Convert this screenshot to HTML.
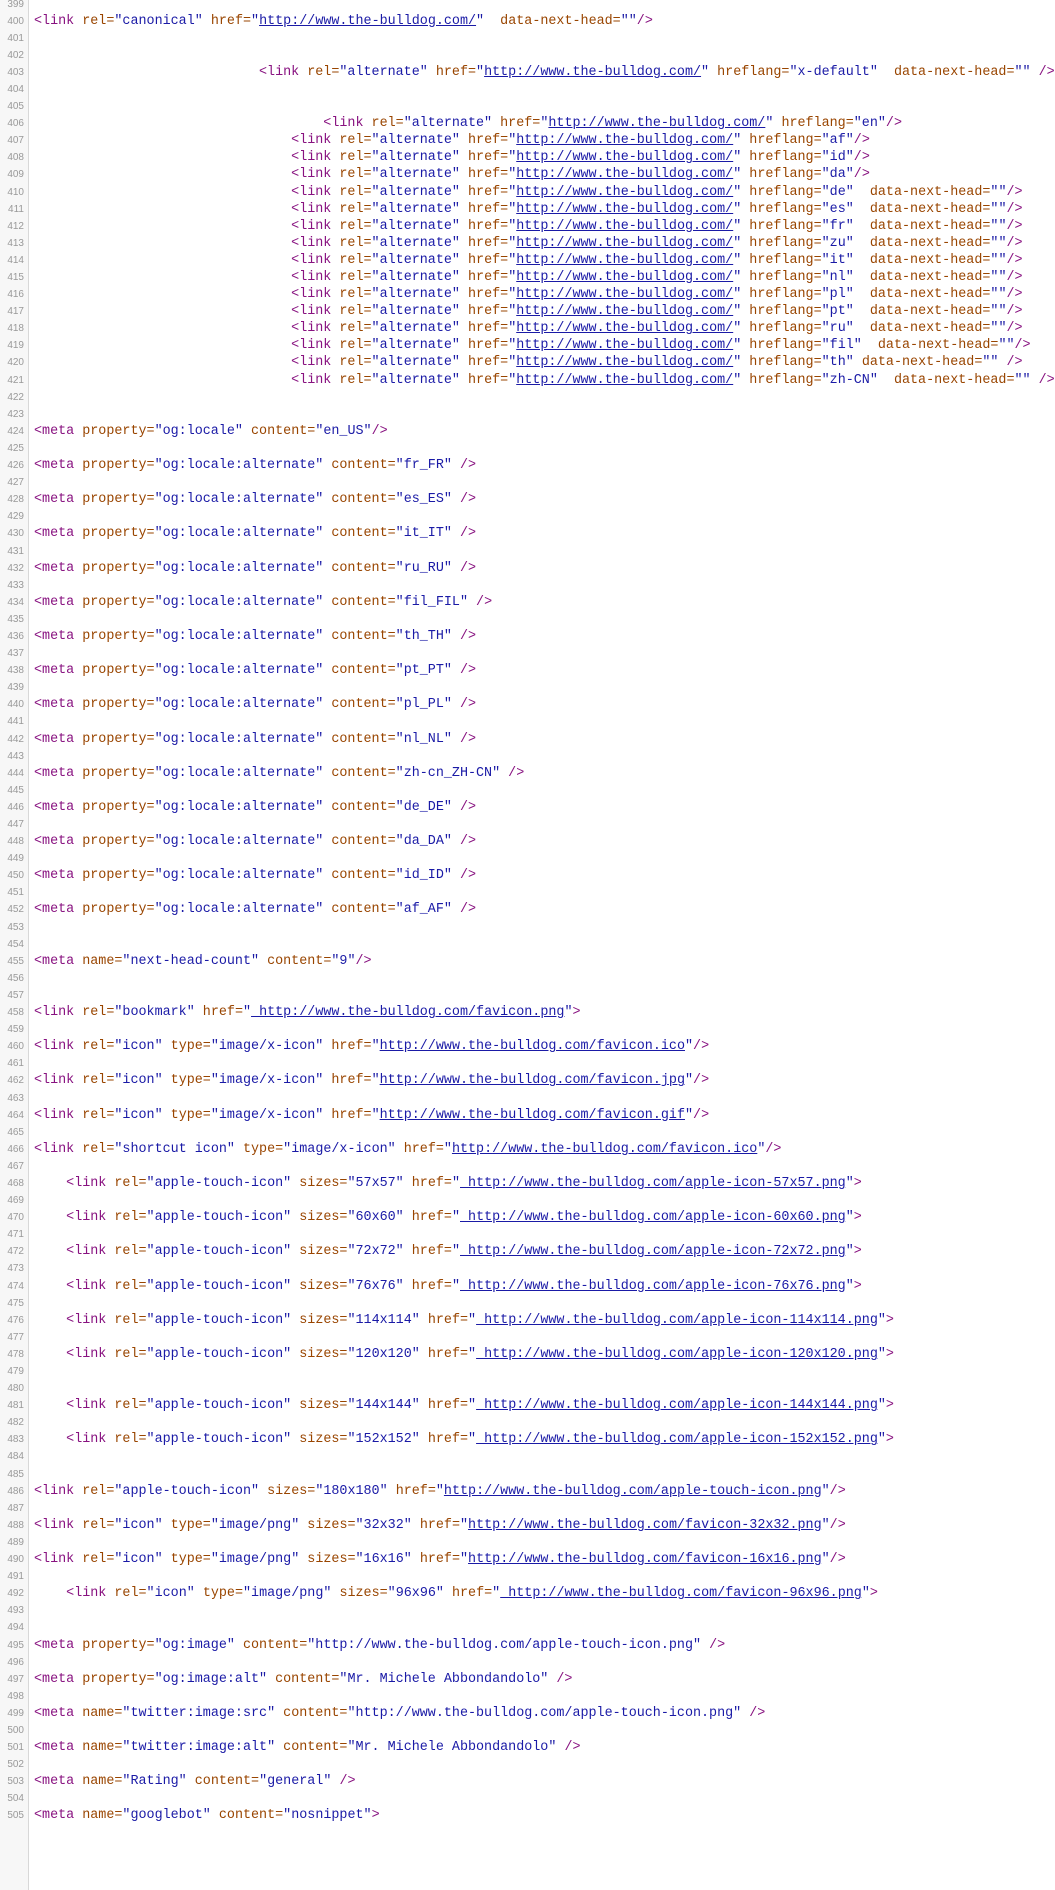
<!DOCTYPE html>
<html><head><meta charset="utf-8"><style>
html,body{margin:0;padding:0;background:#fff;width:1055px;height:1820px;overflow:hidden}
#w{position:relative;margin-top:-4.5px}
#g{position:absolute;left:0;top:-10px;width:28px;height:1900px;background:#f7f7f7;border-right:1px solid #d8d8d8}
.l{position:relative;height:17.1px;line-height:17px;white-space:pre;font-family:"Liberation Mono",monospace;font-size:13.4px;color:#000}
.n{position:absolute;left:0;width:24px;text-align:right;font-family:"Liberation Sans",sans-serif;font-size:10px;color:#999}
.c{position:absolute;left:34px}
.t{color:#881280}.a{color:#994500}.v{color:#1a1aa6}.u{color:#1a1aa6;text-decoration:underline}
</style></head><body><div id="g"></div><div id="w">
<div class="l"><span class="n">399</span></div>
<div class="l"><span class="n">400</span><span class="c"><span class="t">&lt;link</span> <span class="a">rel=</span><span class="v">"canonical"</span> <span class="a">href=</span><span class="v">"</span><span class="u">http://www.the-bulldog.com/</span><span class="v">"</span>  <span class="a">data-next-head=</span><span class="v">""</span><span class="t">/&gt;</span></span></div>
<div class="l"><span class="n">401</span></div>
<div class="l"><span class="n">402</span></div>
<div class="l"><span class="n">403</span><span class="c">                            <span class="t">&lt;link</span> <span class="a">rel=</span><span class="v">"alternate"</span> <span class="a">href=</span><span class="v">"</span><span class="u">http://www.the-bulldog.com/</span><span class="v">"</span> <span class="a">hreflang=</span><span class="v">"x-default"</span>  <span class="a">data-next-head=</span><span class="v">""</span> <span class="t">/&gt;</span></span></div>
<div class="l"><span class="n">404</span></div>
<div class="l"><span class="n">405</span></div>
<div class="l"><span class="n">406</span><span class="c">                                    <span class="t">&lt;link</span> <span class="a">rel=</span><span class="v">"alternate"</span> <span class="a">href=</span><span class="v">"</span><span class="u">http://www.the-bulldog.com/</span><span class="v">"</span> <span class="a">hreflang=</span><span class="v">"en"</span><span class="t">/&gt;</span></span></div>
<div class="l"><span class="n">407</span><span class="c">                                <span class="t">&lt;link</span> <span class="a">rel=</span><span class="v">"alternate"</span> <span class="a">href=</span><span class="v">"</span><span class="u">http://www.the-bulldog.com/</span><span class="v">"</span> <span class="a">hreflang=</span><span class="v">"af"</span><span class="t">/&gt;</span></span></div>
<div class="l"><span class="n">408</span><span class="c">                                <span class="t">&lt;link</span> <span class="a">rel=</span><span class="v">"alternate"</span> <span class="a">href=</span><span class="v">"</span><span class="u">http://www.the-bulldog.com/</span><span class="v">"</span> <span class="a">hreflang=</span><span class="v">"id"</span><span class="t">/&gt;</span></span></div>
<div class="l"><span class="n">409</span><span class="c">                                <span class="t">&lt;link</span> <span class="a">rel=</span><span class="v">"alternate"</span> <span class="a">href=</span><span class="v">"</span><span class="u">http://www.the-bulldog.com/</span><span class="v">"</span> <span class="a">hreflang=</span><span class="v">"da"</span><span class="t">/&gt;</span></span></div>
<div class="l"><span class="n">410</span><span class="c">                                <span class="t">&lt;link</span> <span class="a">rel=</span><span class="v">"alternate"</span> <span class="a">href=</span><span class="v">"</span><span class="u">http://www.the-bulldog.com/</span><span class="v">"</span> <span class="a">hreflang=</span><span class="v">"de"</span>  <span class="a">data-next-head=</span><span class="v">""</span><span class="t">/&gt;</span></span></div>
<div class="l"><span class="n">411</span><span class="c">                                <span class="t">&lt;link</span> <span class="a">rel=</span><span class="v">"alternate"</span> <span class="a">href=</span><span class="v">"</span><span class="u">http://www.the-bulldog.com/</span><span class="v">"</span> <span class="a">hreflang=</span><span class="v">"es"</span>  <span class="a">data-next-head=</span><span class="v">""</span><span class="t">/&gt;</span></span></div>
<div class="l"><span class="n">412</span><span class="c">                                <span class="t">&lt;link</span> <span class="a">rel=</span><span class="v">"alternate"</span> <span class="a">href=</span><span class="v">"</span><span class="u">http://www.the-bulldog.com/</span><span class="v">"</span> <span class="a">hreflang=</span><span class="v">"fr"</span>  <span class="a">data-next-head=</span><span class="v">""</span><span class="t">/&gt;</span></span></div>
<div class="l"><span class="n">413</span><span class="c">                                <span class="t">&lt;link</span> <span class="a">rel=</span><span class="v">"alternate"</span> <span class="a">href=</span><span class="v">"</span><span class="u">http://www.the-bulldog.com/</span><span class="v">"</span> <span class="a">hreflang=</span><span class="v">"zu"</span>  <span class="a">data-next-head=</span><span class="v">""</span><span class="t">/&gt;</span></span></div>
<div class="l"><span class="n">414</span><span class="c">                                <span class="t">&lt;link</span> <span class="a">rel=</span><span class="v">"alternate"</span> <span class="a">href=</span><span class="v">"</span><span class="u">http://www.the-bulldog.com/</span><span class="v">"</span> <span class="a">hreflang=</span><span class="v">"it"</span>  <span class="a">data-next-head=</span><span class="v">""</span><span class="t">/&gt;</span></span></div>
<div class="l"><span class="n">415</span><span class="c">                                <span class="t">&lt;link</span> <span class="a">rel=</span><span class="v">"alternate"</span> <span class="a">href=</span><span class="v">"</span><span class="u">http://www.the-bulldog.com/</span><span class="v">"</span> <span class="a">hreflang=</span><span class="v">"nl"</span>  <span class="a">data-next-head=</span><span class="v">""</span><span class="t">/&gt;</span></span></div>
<div class="l"><span class="n">416</span><span class="c">                                <span class="t">&lt;link</span> <span class="a">rel=</span><span class="v">"alternate"</span> <span class="a">href=</span><span class="v">"</span><span class="u">http://www.the-bulldog.com/</span><span class="v">"</span> <span class="a">hreflang=</span><span class="v">"pl"</span>  <span class="a">data-next-head=</span><span class="v">""</span><span class="t">/&gt;</span></span></div>
<div class="l"><span class="n">417</span><span class="c">                                <span class="t">&lt;link</span> <span class="a">rel=</span><span class="v">"alternate"</span> <span class="a">href=</span><span class="v">"</span><span class="u">http://www.the-bulldog.com/</span><span class="v">"</span> <span class="a">hreflang=</span><span class="v">"pt"</span>  <span class="a">data-next-head=</span><span class="v">""</span><span class="t">/&gt;</span></span></div>
<div class="l"><span class="n">418</span><span class="c">                                <span class="t">&lt;link</span> <span class="a">rel=</span><span class="v">"alternate"</span> <span class="a">href=</span><span class="v">"</span><span class="u">http://www.the-bulldog.com/</span><span class="v">"</span> <span class="a">hreflang=</span><span class="v">"ru"</span>  <span class="a">data-next-head=</span><span class="v">""</span><span class="t">/&gt;</span></span></div>
<div class="l"><span class="n">419</span><span class="c">                                <span class="t">&lt;link</span> <span class="a">rel=</span><span class="v">"alternate"</span> <span class="a">href=</span><span class="v">"</span><span class="u">http://www.the-bulldog.com/</span><span class="v">"</span> <span class="a">hreflang=</span><span class="v">"fil"</span>  <span class="a">data-next-head=</span><span class="v">""</span><span class="t">/&gt;</span></span></div>
<div class="l"><span class="n">420</span><span class="c">                                <span class="t">&lt;link</span> <span class="a">rel=</span><span class="v">"alternate"</span> <span class="a">href=</span><span class="v">"</span><span class="u">http://www.the-bulldog.com/</span><span class="v">"</span> <span class="a">hreflang=</span><span class="v">"th"</span> <span class="a">data-next-head=</span><span class="v">""</span> <span class="t">/&gt;</span></span></div>
<div class="l"><span class="n">421</span><span class="c">                                <span class="t">&lt;link</span> <span class="a">rel=</span><span class="v">"alternate"</span> <span class="a">href=</span><span class="v">"</span><span class="u">http://www.the-bulldog.com/</span><span class="v">"</span> <span class="a">hreflang=</span><span class="v">"zh-CN"</span>  <span class="a">data-next-head=</span><span class="v">""</span> <span class="t">/&gt;</span></span></div>
<div class="l"><span class="n">422</span></div>
<div class="l"><span class="n">423</span></div>
<div class="l"><span class="n">424</span><span class="c"><span class="t">&lt;meta</span> <span class="a">property=</span><span class="v">"og:locale"</span> <span class="a">content=</span><span class="v">"en_US"</span><span class="t">/&gt;</span></span></div>
<div class="l"><span class="n">425</span></div>
<div class="l"><span class="n">426</span><span class="c"><span class="t">&lt;meta</span> <span class="a">property=</span><span class="v">"og:locale:alternate"</span> <span class="a">content=</span><span class="v">"fr_FR"</span> <span class="t">/&gt;</span></span></div>
<div class="l"><span class="n">427</span></div>
<div class="l"><span class="n">428</span><span class="c"><span class="t">&lt;meta</span> <span class="a">property=</span><span class="v">"og:locale:alternate"</span> <span class="a">content=</span><span class="v">"es_ES"</span> <span class="t">/&gt;</span></span></div>
<div class="l"><span class="n">429</span></div>
<div class="l"><span class="n">430</span><span class="c"><span class="t">&lt;meta</span> <span class="a">property=</span><span class="v">"og:locale:alternate"</span> <span class="a">content=</span><span class="v">"it_IT"</span> <span class="t">/&gt;</span></span></div>
<div class="l"><span class="n">431</span></div>
<div class="l"><span class="n">432</span><span class="c"><span class="t">&lt;meta</span> <span class="a">property=</span><span class="v">"og:locale:alternate"</span> <span class="a">content=</span><span class="v">"ru_RU"</span> <span class="t">/&gt;</span></span></div>
<div class="l"><span class="n">433</span></div>
<div class="l"><span class="n">434</span><span class="c"><span class="t">&lt;meta</span> <span class="a">property=</span><span class="v">"og:locale:alternate"</span> <span class="a">content=</span><span class="v">"fil_FIL"</span> <span class="t">/&gt;</span></span></div>
<div class="l"><span class="n">435</span></div>
<div class="l"><span class="n">436</span><span class="c"><span class="t">&lt;meta</span> <span class="a">property=</span><span class="v">"og:locale:alternate"</span> <span class="a">content=</span><span class="v">"th_TH"</span> <span class="t">/&gt;</span></span></div>
<div class="l"><span class="n">437</span></div>
<div class="l"><span class="n">438</span><span class="c"><span class="t">&lt;meta</span> <span class="a">property=</span><span class="v">"og:locale:alternate"</span> <span class="a">content=</span><span class="v">"pt_PT"</span> <span class="t">/&gt;</span></span></div>
<div class="l"><span class="n">439</span></div>
<div class="l"><span class="n">440</span><span class="c"><span class="t">&lt;meta</span> <span class="a">property=</span><span class="v">"og:locale:alternate"</span> <span class="a">content=</span><span class="v">"pl_PL"</span> <span class="t">/&gt;</span></span></div>
<div class="l"><span class="n">441</span></div>
<div class="l"><span class="n">442</span><span class="c"><span class="t">&lt;meta</span> <span class="a">property=</span><span class="v">"og:locale:alternate"</span> <span class="a">content=</span><span class="v">"nl_NL"</span> <span class="t">/&gt;</span></span></div>
<div class="l"><span class="n">443</span></div>
<div class="l"><span class="n">444</span><span class="c"><span class="t">&lt;meta</span> <span class="a">property=</span><span class="v">"og:locale:alternate"</span> <span class="a">content=</span><span class="v">"zh-cn_ZH-CN"</span> <span class="t">/&gt;</span></span></div>
<div class="l"><span class="n">445</span></div>
<div class="l"><span class="n">446</span><span class="c"><span class="t">&lt;meta</span> <span class="a">property=</span><span class="v">"og:locale:alternate"</span> <span class="a">content=</span><span class="v">"de_DE"</span> <span class="t">/&gt;</span></span></div>
<div class="l"><span class="n">447</span></div>
<div class="l"><span class="n">448</span><span class="c"><span class="t">&lt;meta</span> <span class="a">property=</span><span class="v">"og:locale:alternate"</span> <span class="a">content=</span><span class="v">"da_DA"</span> <span class="t">/&gt;</span></span></div>
<div class="l"><span class="n">449</span></div>
<div class="l"><span class="n">450</span><span class="c"><span class="t">&lt;meta</span> <span class="a">property=</span><span class="v">"og:locale:alternate"</span> <span class="a">content=</span><span class="v">"id_ID"</span> <span class="t">/&gt;</span></span></div>
<div class="l"><span class="n">451</span></div>
<div class="l"><span class="n">452</span><span class="c"><span class="t">&lt;meta</span> <span class="a">property=</span><span class="v">"og:locale:alternate"</span> <span class="a">content=</span><span class="v">"af_AF"</span> <span class="t">/&gt;</span></span></div>
<div class="l"><span class="n">453</span></div>
<div class="l"><span class="n">454</span></div>
<div class="l"><span class="n">455</span><span class="c"><span class="t">&lt;meta</span> <span class="a">name=</span><span class="v">"next-head-count"</span> <span class="a">content=</span><span class="v">"9"</span><span class="t">/&gt;</span></span></div>
<div class="l"><span class="n">456</span></div>
<div class="l"><span class="n">457</span></div>
<div class="l"><span class="n">458</span><span class="c"><span class="t">&lt;link</span> <span class="a">rel=</span><span class="v">"bookmark"</span> <span class="a">href=</span><span class="v">"</span><span class="u"> http://www.the-bulldog.com/favicon.png</span><span class="v">"</span><span class="t">&gt;</span></span></div>
<div class="l"><span class="n">459</span></div>
<div class="l"><span class="n">460</span><span class="c"><span class="t">&lt;link</span> <span class="a">rel=</span><span class="v">"icon"</span> <span class="a">type=</span><span class="v">"image/x-icon"</span> <span class="a">href=</span><span class="v">"</span><span class="u">http://www.the-bulldog.com/favicon.ico</span><span class="v">"</span><span class="t">/&gt;</span></span></div>
<div class="l"><span class="n">461</span></div>
<div class="l"><span class="n">462</span><span class="c"><span class="t">&lt;link</span> <span class="a">rel=</span><span class="v">"icon"</span> <span class="a">type=</span><span class="v">"image/x-icon"</span> <span class="a">href=</span><span class="v">"</span><span class="u">http://www.the-bulldog.com/favicon.jpg</span><span class="v">"</span><span class="t">/&gt;</span></span></div>
<div class="l"><span class="n">463</span></div>
<div class="l"><span class="n">464</span><span class="c"><span class="t">&lt;link</span> <span class="a">rel=</span><span class="v">"icon"</span> <span class="a">type=</span><span class="v">"image/x-icon"</span> <span class="a">href=</span><span class="v">"</span><span class="u">http://www.the-bulldog.com/favicon.gif</span><span class="v">"</span><span class="t">/&gt;</span></span></div>
<div class="l"><span class="n">465</span></div>
<div class="l"><span class="n">466</span><span class="c"><span class="t">&lt;link</span> <span class="a">rel=</span><span class="v">"shortcut icon"</span> <span class="a">type=</span><span class="v">"image/x-icon"</span> <span class="a">href=</span><span class="v">"</span><span class="u">http://www.the-bulldog.com/favicon.ico</span><span class="v">"</span><span class="t">/&gt;</span></span></div>
<div class="l"><span class="n">467</span></div>
<div class="l"><span class="n">468</span><span class="c">    <span class="t">&lt;link</span> <span class="a">rel=</span><span class="v">"apple-touch-icon"</span> <span class="a">sizes=</span><span class="v">"57x57"</span> <span class="a">href=</span><span class="v">"</span><span class="u"> http://www.the-bulldog.com/apple-icon-57x57.png</span><span class="v">"</span><span class="t">&gt;</span></span></div>
<div class="l"><span class="n">469</span></div>
<div class="l"><span class="n">470</span><span class="c">    <span class="t">&lt;link</span> <span class="a">rel=</span><span class="v">"apple-touch-icon"</span> <span class="a">sizes=</span><span class="v">"60x60"</span> <span class="a">href=</span><span class="v">"</span><span class="u"> http://www.the-bulldog.com/apple-icon-60x60.png</span><span class="v">"</span><span class="t">&gt;</span></span></div>
<div class="l"><span class="n">471</span></div>
<div class="l"><span class="n">472</span><span class="c">    <span class="t">&lt;link</span> <span class="a">rel=</span><span class="v">"apple-touch-icon"</span> <span class="a">sizes=</span><span class="v">"72x72"</span> <span class="a">href=</span><span class="v">"</span><span class="u"> http://www.the-bulldog.com/apple-icon-72x72.png</span><span class="v">"</span><span class="t">&gt;</span></span></div>
<div class="l"><span class="n">473</span></div>
<div class="l"><span class="n">474</span><span class="c">    <span class="t">&lt;link</span> <span class="a">rel=</span><span class="v">"apple-touch-icon"</span> <span class="a">sizes=</span><span class="v">"76x76"</span> <span class="a">href=</span><span class="v">"</span><span class="u"> http://www.the-bulldog.com/apple-icon-76x76.png</span><span class="v">"</span><span class="t">&gt;</span></span></div>
<div class="l"><span class="n">475</span></div>
<div class="l"><span class="n">476</span><span class="c">    <span class="t">&lt;link</span> <span class="a">rel=</span><span class="v">"apple-touch-icon"</span> <span class="a">sizes=</span><span class="v">"114x114"</span> <span class="a">href=</span><span class="v">"</span><span class="u"> http://www.the-bulldog.com/apple-icon-114x114.png</span><span class="v">"</span><span class="t">&gt;</span></span></div>
<div class="l"><span class="n">477</span></div>
<div class="l"><span class="n">478</span><span class="c">    <span class="t">&lt;link</span> <span class="a">rel=</span><span class="v">"apple-touch-icon"</span> <span class="a">sizes=</span><span class="v">"120x120"</span> <span class="a">href=</span><span class="v">"</span><span class="u"> http://www.the-bulldog.com/apple-icon-120x120.png</span><span class="v">"</span><span class="t">&gt;</span></span></div>
<div class="l"><span class="n">479</span></div>
<div class="l"><span class="n">480</span></div>
<div class="l"><span class="n">481</span><span class="c">    <span class="t">&lt;link</span> <span class="a">rel=</span><span class="v">"apple-touch-icon"</span> <span class="a">sizes=</span><span class="v">"144x144"</span> <span class="a">href=</span><span class="v">"</span><span class="u"> http://www.the-bulldog.com/apple-icon-144x144.png</span><span class="v">"</span><span class="t">&gt;</span></span></div>
<div class="l"><span class="n">482</span></div>
<div class="l"><span class="n">483</span><span class="c">    <span class="t">&lt;link</span> <span class="a">rel=</span><span class="v">"apple-touch-icon"</span> <span class="a">sizes=</span><span class="v">"152x152"</span> <span class="a">href=</span><span class="v">"</span><span class="u"> http://www.the-bulldog.com/apple-icon-152x152.png</span><span class="v">"</span><span class="t">&gt;</span></span></div>
<div class="l"><span class="n">484</span></div>
<div class="l"><span class="n">485</span></div>
<div class="l"><span class="n">486</span><span class="c"><span class="t">&lt;link</span> <span class="a">rel=</span><span class="v">"apple-touch-icon"</span> <span class="a">sizes=</span><span class="v">"180x180"</span> <span class="a">href=</span><span class="v">"</span><span class="u">http://www.the-bulldog.com/apple-touch-icon.png</span><span class="v">"</span><span class="t">/&gt;</span></span></div>
<div class="l"><span class="n">487</span></div>
<div class="l"><span class="n">488</span><span class="c"><span class="t">&lt;link</span> <span class="a">rel=</span><span class="v">"icon"</span> <span class="a">type=</span><span class="v">"image/png"</span> <span class="a">sizes=</span><span class="v">"32x32"</span> <span class="a">href=</span><span class="v">"</span><span class="u">http://www.the-bulldog.com/favicon-32x32.png</span><span class="v">"</span><span class="t">/&gt;</span></span></div>
<div class="l"><span class="n">489</span></div>
<div class="l"><span class="n">490</span><span class="c"><span class="t">&lt;link</span> <span class="a">rel=</span><span class="v">"icon"</span> <span class="a">type=</span><span class="v">"image/png"</span> <span class="a">sizes=</span><span class="v">"16x16"</span> <span class="a">href=</span><span class="v">"</span><span class="u">http://www.the-bulldog.com/favicon-16x16.png</span><span class="v">"</span><span class="t">/&gt;</span></span></div>
<div class="l"><span class="n">491</span></div>
<div class="l"><span class="n">492</span><span class="c">    <span class="t">&lt;link</span> <span class="a">rel=</span><span class="v">"icon"</span> <span class="a">type=</span><span class="v">"image/png"</span> <span class="a">sizes=</span><span class="v">"96x96"</span> <span class="a">href=</span><span class="v">"</span><span class="u"> http://www.the-bulldog.com/favicon-96x96.png</span><span class="v">"</span><span class="t">&gt;</span></span></div>
<div class="l"><span class="n">493</span></div>
<div class="l"><span class="n">494</span></div>
<div class="l"><span class="n">495</span><span class="c"><span class="t">&lt;meta</span> <span class="a">property=</span><span class="v">"og:image"</span> <span class="a">content=</span><span class="v">"http://www.the-bulldog.com/apple-touch-icon.png"</span> <span class="t">/&gt;</span></span></div>
<div class="l"><span class="n">496</span></div>
<div class="l"><span class="n">497</span><span class="c"><span class="t">&lt;meta</span> <span class="a">property=</span><span class="v">"og:image:alt"</span> <span class="a">content=</span><span class="v">"Mr. Michele Abbondandolo"</span> <span class="t">/&gt;</span></span></div>
<div class="l"><span class="n">498</span></div>
<div class="l"><span class="n">499</span><span class="c"><span class="t">&lt;meta</span> <span class="a">name=</span><span class="v">"twitter:image:src"</span> <span class="a">content=</span><span class="v">"http://www.the-bulldog.com/apple-touch-icon.png"</span> <span class="t">/&gt;</span></span></div>
<div class="l"><span class="n">500</span></div>
<div class="l"><span class="n">501</span><span class="c"><span class="t">&lt;meta</span> <span class="a">name=</span><span class="v">"twitter:image:alt"</span> <span class="a">content=</span><span class="v">"Mr. Michele Abbondandolo"</span> <span class="t">/&gt;</span></span></div>
<div class="l"><span class="n">502</span></div>
<div class="l"><span class="n">503</span><span class="c"><span class="t">&lt;meta</span> <span class="a">name=</span><span class="v">"Rating"</span> <span class="a">content=</span><span class="v">"general"</span> <span class="t">/&gt;</span></span></div>
<div class="l"><span class="n">504</span></div>
<div class="l"><span class="n">505</span><span class="c"><span class="t">&lt;meta</span> <span class="a">name=</span><span class="v">"googlebot"</span> <span class="a">content=</span><span class="v">"nosnippet"</span><span class="t">&gt;</span></span></div>
</div></body></html>
